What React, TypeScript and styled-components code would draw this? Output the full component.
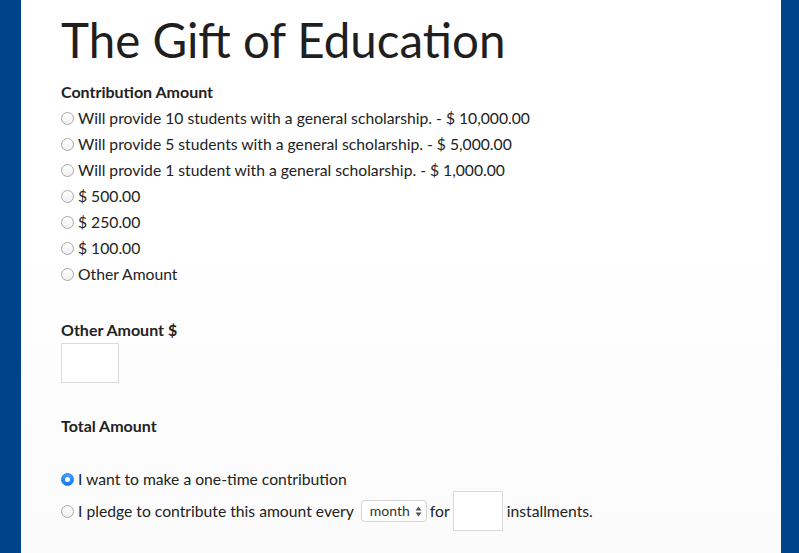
import React, { useState } from 'react';
import styled, { createGlobalStyle } from 'styled-components';

const GlobalStyle = createGlobalStyle`
  html, body {
    margin: 0;
    padding: 0;
    background: #00438a;
  }
  body {
    font-family: Lato, "Open Sans", Arial, sans-serif;
    color: #222222;
  }
`;

// White page column between the blue edges
const Page = styled.div`
  margin: 0 18px 0 21px;
  min-height: 553px;
  background: linear-gradient(#ffffff 0%, #ffffff 40%, #fbfbfb 100%);
  padding: 12px 40px 20px 40px;
  box-sizing: border-box;
`;

const Title = styled.h1`
  font-size: 47.5px;
  font-weight: 400;
  margin: 0 0 14px 0;
  line-height: 56px;
  color: #1f1f1f;
`;

const SectionLabel = styled.div<{ gap?: number }>`
  font-size: 16px;
  font-weight: 700;
  line-height: 20px;
  margin-top: ${(p) => p.gap ?? 0}px;
  margin-bottom: 3px;
`;

const OptionList = styled.div<{ gap?: number }>`
  display: flex;
  flex-direction: column;
  margin-top: ${(p) => p.gap ?? 0}px;
`;

const Option = styled.label`
  display: flex;
  align-items: center;
  height: 26px;
  font-size: 15.7px;
  line-height: 26px;
  cursor: pointer;
  white-space: nowrap;
`;

const Radio = styled.span<{ checked?: boolean }>`
  width: 13px;
  height: 13px;
  border-radius: 50%;
  box-sizing: border-box;
  margin-right: 4px;
  flex: none;
  position: relative;
  border: 1px solid ${(p) => (p.checked ? '#1a7ff0' : '#a9a9a9')};
  background: ${(p) => (p.checked ? 'linear-gradient(#49a2fb, #1576ed)' : 'linear-gradient(#ffffff, #f0f0f0)')};

  &::after {
    content: '';
    display: ${(p) => (p.checked ? 'block' : 'none')};
    position: absolute;
    width: 5px;
    height: 5px;
    border-radius: 50%;
    background: #ffffff;
    left: 3px;
    top: 3px;
  }
`;

const TextBox = styled.input<{ w: number }>`
  width: ${(p) => p.w}px;
  height: 40px;
  box-sizing: border-box;
  border: 1px solid #dadada;
  background: #ffffff;
  padding: 0 6px;
  font-family: inherit;
  font-size: 15px;
  outline: none;
`;

const PledgeRow = styled(Option)`
  height: 38px;
`;

const Select = styled.span`
  display: inline-flex;
  align-items: center;
  height: 22px;
  box-sizing: border-box;
  border: 1px solid #d3d3d3;
  border-radius: 4px;
  padding: 0 4px 0 8px;
  margin: 0 3px 0 7px;
  font-size: 14px;
  color: #333;
  background: #ffffff;
`;

const Arrows = styled.svg`
  margin-left: 5px;
`;

const Spaced = styled.span`
  margin-right: 3px;
`;

const After = styled.span`
  margin-left: 4px;
`;

const options = [
  'Will provide 10 students with a general scholarship. - $ 10,000.00',
  'Will provide 5 students with a general scholarship. - $ 5,000.00',
  'Will provide 1 student with a general scholarship. - $ 1,000.00',
  '$ 500.00',
  '$ 250.00',
  '$ 100.00',
  'Other Amount',
];

export default function App() {
  const [amount, setAmount] = useState<number | null>(null);
  const [kind, setKind] = useState<'once' | 'pledge'>('once');

  return (
    <>
      <GlobalStyle />
      <Page>
        <Title>The Gift of Education</Title>

        <SectionLabel>Contribution Amount</SectionLabel>
        <OptionList>
          {options.map((text, i) => (
            <Option key={text} onClick={() => setAmount(i)}>
              <Radio checked={amount === i} />
              {text}
            </Option>
          ))}
        </OptionList>

        <SectionLabel gap={33}>Other Amount $</SectionLabel>
        <TextBox w={58} />

        <SectionLabel gap={33}>Total Amount</SectionLabel>

        <OptionList gap={30}>
          <Option onClick={() => setKind('once')}>
            <Radio checked={kind === 'once'} />
            I want to make a one-time contribution
          </Option>
          <PledgeRow onClick={() => setKind('pledge')}>
            <Radio checked={kind === 'pledge'} />
            I pledge to contribute this amount every
            <Select>
              month
              <Arrows width="7" height="11" viewBox="0 0 7 11">
                <path d="M3.5 0.5 L6.5 4.5 L0.5 4.5 Z" fill="#555" />
                <path d="M3.5 10.5 L6.5 6.5 L0.5 6.5 Z" fill="#555" />
              </Arrows>
            </Select>
            <Spaced>for</Spaced>
            <TextBox w={50} />
            <After>installments.</After>
          </PledgeRow>
        </OptionList>
      </Page>
    </>
  );
}
